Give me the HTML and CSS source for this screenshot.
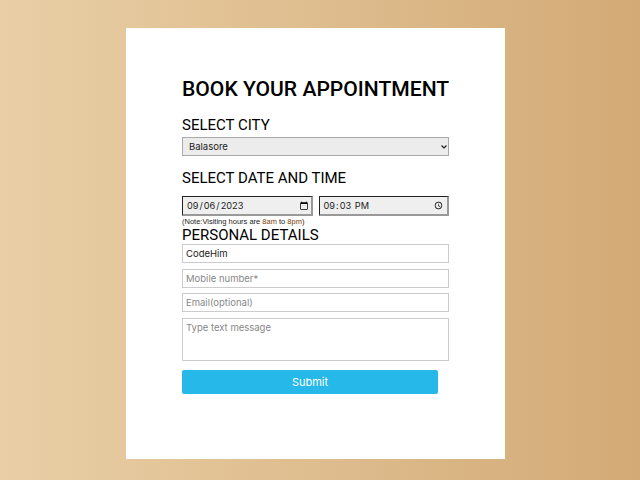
FILE: index.html
```html
<!DOCTYPE html>
<html>
	<head>
		<meta charset="UTF-8">
		<title>Book your appointment</title>
		<link rel="stylesheet" href="styles.css">
	</head>
	<body>
		<form class="card">
			<h1 class="title">BOOK YOUR APPOINTMENT</h1>
			<h2 class="label label-city">SELECT CITY</h2>
			<div class="city-wrap">
				<select class="city">
					<option>Balasore</option>
				</select>
				<svg class="city-arrow" width="6" height="4" viewBox="0 0 6 4"><path d="M0.5 0.5 L3 3 L5.5 0.5" fill="none" stroke="#222" stroke-width="1.2"/></svg>
			</div>
			<h2 class="label label-date">SELECT DATE AND TIME</h2>
			<div class="when">
				<input type="date" class="when-input" value="2023-09-06">
				<input type="time" class="when-input" value="21:03">
			</div>
			<p class="note">(Note:Visiting hours are <span class="hour">8am</span> to <span class="hour">8pm</span>)</p>
			<h2 class="label label-personal">PERSONAL DETAILS</h2>
			<input type="text" class="field" value="CodeHim">
			<input type="text" class="field field-mobile" placeholder="Mobile number*">
			<input type="text" class="field" placeholder="Email(optional)">
			<textarea class="field message" placeholder="Type text message"></textarea>
			<button type="button" class="submit">Submit</button>
		</form>
	</body>
</html>
```

FILE: styles.css
```css
*{
	padding: 0;
	margin: 0;
	box-sizing: border-box;
}
html,body{
	width: 100%;
	height: 100%;
	overflow: hidden;
}
body{
	padding: 28px 0 0 126px;
	background: linear-gradient(to right, #e9cfa6, #d3aa76);
	font-family: Inter, "Liberation Sans", sans-serif;
}
.card{
	width: 379px;
	height: 431px;
	padding: 48px 56px 0;
	background-color: #fff;
	display: flex;
	flex-direction: column;
	align-items: flex-start;
}
.title{
	font: 500 21.1px/26px Roboto, sans-serif;
	color: #000;
	white-space: nowrap;
}
.label{
	font: 400 15px/19px Roboto, sans-serif;
	color: #000;
	white-space: nowrap;
}
.label-city{
	margin-top: 14px;
}
.label-date{
	margin-top: 13px;
}
.label-personal{
	line-height: 18px;
}
.city-wrap{
	position: relative;
	width: 267px;
	height: 19px;
	margin-top: 2px;
}
.city{
	display: block;
	width: 100%;
	height: 100%;
	padding-left: 6px;
	appearance: none;
	border: 1px solid #a9a9a9;
	border-radius: 0;
	background-color: #ececec;
	font-family: Inter, "Liberation Sans", sans-serif;
	font-size: 9.5px;
	color: #222;
}
.city-arrow{
	position: absolute;
	right: 2px;
	top: 8px;
}
.when{
	width: 267px;
	margin-top: 8px;
	display: flex;
	justify-content: space-between;
}
.when-input{
	width: 130.5px;
	height: 20px;
	padding: 0 0 0 3px;
	border-style: solid;
	border-width: 1px 2px 2px 1px;
	border-color: #222 #999 #999 #222;
	background-color: #efefef;
	font-family: Inter, "Liberation Sans", sans-serif;
	font-size: 9.2px;
	color: #222;
}
.note{
	margin-top: 1px;
	font: 400 7.5px/9px "Liberation Sans", Arial, sans-serif;
	color: #222;
}
.hour{
	color: #7a3b00;
}
.field{
	display: block;
	width: 267px;
	height: 19px;
	margin-bottom: 6px;
	padding: 0 3px;
	border: 1px solid #ccc;
	background-color: #fff;
	font-family: Inter, "Liberation Sans", sans-serif;
	font-size: 9.5px;
	color: #222;
}
.field-mobile{
	margin-bottom: 5px;
}
.field::placeholder{
	color: #888;
}
.message{
	height: 43px;
	margin-bottom: 9px;
	padding-top: 3px;
	resize: none;
}
.submit{
	width: 256px;
	height: 24px;
	border: 0;
	border-radius: 2px;
	background-color: #26b8e8;
	color: #fff;
	font-family: Inter, "Liberation Sans", sans-serif;
	font-size: 11px;
}
```
